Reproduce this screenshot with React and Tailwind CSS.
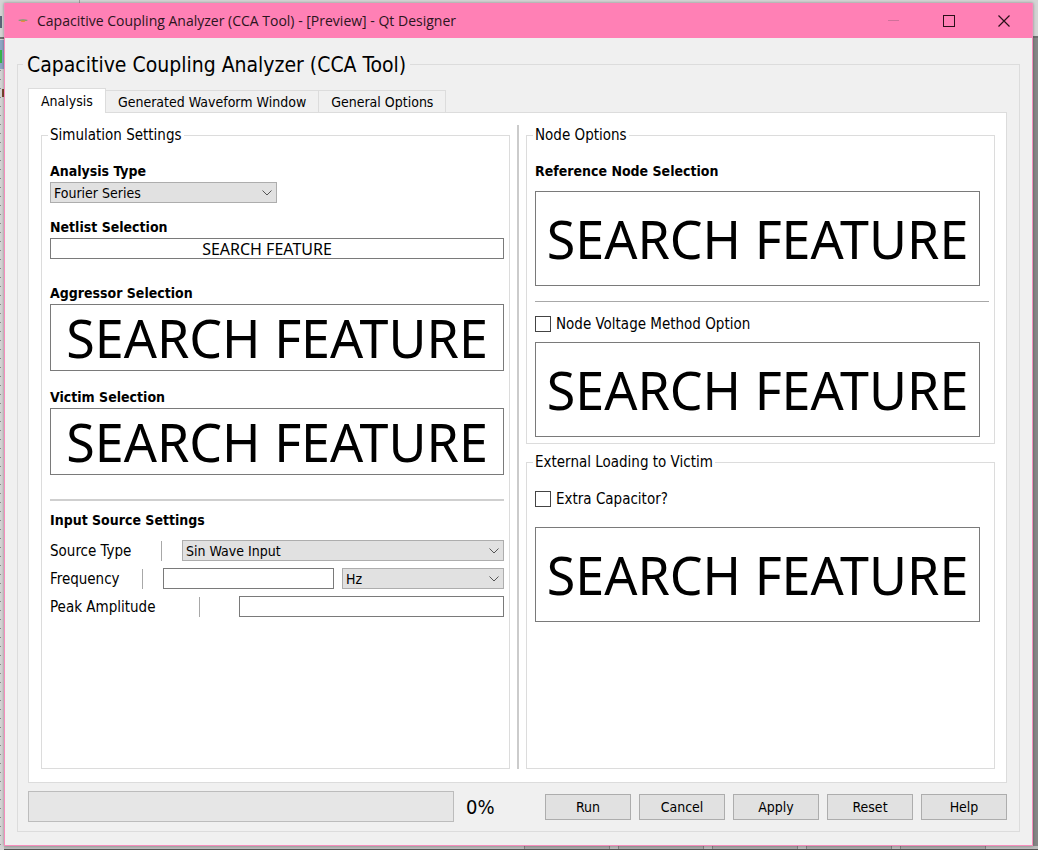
const UI = "font-['DejaVu_Sans_Condensed','DejaVu_Sans',sans-serif]";

const FIELD = "block w-full border border-[#7a7a7a] bg-white text-center text-black outline-none font-['Noto_Sans',sans-serif]";

function SearchBox({ id, size }) {
  const sizes = {
    sm: "h-[21px] pl-1 pr-6 text-[16px] leading-[18px]",
    md: "h-[67px] px-1 text-[52px] leading-[60px]",
    lg: "h-[95px] px-1 text-[52px] leading-[60px]",
  };
  return <input id={id} type="text" defaultValue="SEARCH FEATURE" className={`${FIELD} ${sizes[size]}`} />;
}

function Combo({ id, options, className = "", label }) {
  return (
    <div className={`relative h-[21px] ${className}`}>
      <select
        id={id}
        aria-label={label}
        className="block h-full w-full appearance-none border border-[#adadad] bg-[#e1e1e1] pl-[3px] pr-5 text-[14px] leading-[18px] text-black outline-none"
      >
        {options.map((o) => (
          <option key={o}>{o}</option>
        ))}
      </select>
      <svg viewBox="0 0 10 6" className="pointer-events-none absolute right-[5px] top-2 h-[6px] w-[10px]" fill="none" stroke="#555">
        <path d="M0.5 0.5 L5 5 L9.5 0.5" />
      </svg>
    </div>
  );
}

function GroupBox({ title, className = "", children }) {
  return (
    <fieldset className={`min-w-0 border border-[#dcdcdc] pl-2 pr-[5px] ${className}`}>
      <legend className="-ml-[2px] px-[2px] text-[15px] leading-5">{title}</legend>
      {children}
    </fieldset>
  );
}

function Heading({ htmlFor, className = "", children }) {
  return (
    <label htmlFor={htmlFor} className={`mb-px block text-[14px] font-bold leading-5 ${className}`}>
      {children}
    </label>
  );
}

function SourceRow({ htmlFor, label, labelWidth, gap, children }) {
  return (
    <div className="flex h-[21px] items-center">
      <label htmlFor={htmlFor} className={`shrink-0 whitespace-nowrap text-[15px] leading-5 ${labelWidth}`}>
        {label}
      </label>
      <span className={`h-5 w-px shrink-0 bg-[#a8a8a8] ${gap}`} />
      {children}
    </div>
  );
}

function Check({ id, children, className = "" }) {
  return (
    <div className={`flex h-5 items-center gap-[5px] ${className}`}>
      <input id={id} type="checkbox" className="h-4 w-4 shrink-0 appearance-none border border-[#444] bg-white checked:bg-[#444]" />
      <label htmlFor={id} className="text-[15px] leading-5">
        {children}
      </label>
    </div>
  );
}

function TitleBar() {
  const btn = "flex h-full w-[55px] items-center justify-center";
  return (
    <header className="flex h-[35px] items-center bg-[#ff80b5] pr-px">
      <svg viewBox="0 0 10 6" className="ml-[13px] h-[6px] w-[10px]">
        <path d="M0 2 Q5 0.4 10 2 L8.5 3 H1.5 Z" fill="#7f9a78" />
        <path d="M2.5 2.4 H7.5 L6.5 4 H3.5 Z" fill="#e88a3c" />
      </svg>
      <h1 className="ml-[9px] flex-1 truncate text-[14px] leading-5 text-[#2b1520] font-['Open_Sans',sans-serif]">
        Capacitive Coupling Analyzer (CCA Tool) - [Preview] - Qt Designer
      </h1>
      <button type="button" aria-label="Minimize" className={btn}>
        <svg viewBox="0 0 12 12" className="h-3 w-3" stroke="#d0709a">
          <path d="M0 5.5 H11" />
        </svg>
      </button>
      <button type="button" aria-label="Maximize" className={btn}>
        <svg viewBox="0 0 12 12" className="h-3 w-3" fill="none" stroke="#2a1019">
          <rect x="0.5" y="0.5" width="11" height="11" />
        </svg>
      </button>
      <button type="button" aria-label="Close" className={btn}>
        <svg viewBox="0 0 12 12" className="h-3 w-3" stroke="#2a1019" strokeWidth="1.2">
          <path d="M0.5 0.5 L11.5 11.5 M11.5 0.5 L0.5 11.5" />
        </svg>
      </button>
    </header>
  );
}

function Backdrop() {
  return (
    <div aria-hidden="true" className="absolute inset-0 overflow-hidden bg-[#d4d4d4]">
      <div className="absolute left-[79px] top-0 h-1 w-px bg-[#a0a0a0]" />
      <div className="absolute left-0 top-4 h-3 w-[2px] bg-[#5d6478]" />
      <div className="absolute left-0 top-[37px] h-[2px] w-1 bg-[#707070]" />
      <div className="absolute left-0 top-10 h-[29px] w-1 bg-[#8fa6c4]" />
      <div className="absolute left-0 top-[50px] h-[13px] w-[2px] bg-[#38b54a]" />
      <div className="absolute bottom-0 left-0 top-[70px] w-px bg-[repeating-linear-gradient(to_bottom,#8a8a8a_0px,#8a8a8a_1px,transparent_1px,transparent_9px)]" />
      <div className="absolute left-[2px] top-[89px] h-2 w-[2px] bg-[#7a4a30]" />
      <div className="absolute bottom-0 right-0 top-[36px] w-[6px] border-t-2 border-[#6e6e6e] bg-[#868686]" />
      <div className="absolute bottom-0 left-1 right-0 flex h-1 justify-end gap-2 border-b border-[#555] bg-[#bcbcbc] pr-[52px]">
        {[0, 1, 2, 3, 4].map((n) => (
          <span key={n} className="h-full w-[86px] border-x border-[#808080] bg-[#a9a9a9]" />
        ))}
      </div>
    </div>
  );
}

const TABS = ["Generated Waveform Window", "General Options"];
const ACTIONS = ["Run", "Cancel", "Apply", "Reset", "Help"];

export default function App() {
  return (
    <div className={`relative flex min-h-screen flex-col pb-1 pl-1 pr-[5px] pt-[3px] text-black ${UI}`}>
      <Backdrop />
      <main className="relative flex flex-1 flex-col border border-t-0 border-[#f58cbc] bg-[#f0f0f0] shadow-[0_0_3px_rgba(0,0,0,0.35)]">
        <TitleBar />
        <section className="mx-3 mb-[13px] mt-[26px] flex flex-1 flex-col border border-[#dcdcdc] pb-[9px] pl-[10px] pr-3">
          <h2 className="-ml-[5px] -mt-[13px] self-start bg-[#f0f0f0] px-1 text-[21px] leading-[26px]">
            Capacitive Coupling Analyzer (CCA Tool)
          </h2>

          <div role="tablist" className="mt-[10px] flex items-end text-[14px] leading-5">
            <button type="button" role="tab" aria-selected="true" className="relative -mb-px h-[25px] border border-b-0 border-[#dcdcdc] bg-white px-3">
              Analysis
            </button>
            {TABS.map((t) => (
              <button key={t} type="button" role="tab" aria-selected="false" className="h-[22px] border border-b-0 border-l-0 border-[#dcdcdc] px-3">
                {t}
              </button>
            ))}
          </div>

          <div role="tabpanel" className="grid flex-1 grid-cols-[1fr_2px_1fr] gap-x-[7px] border border-[#dcdcdc] bg-white pb-[13px] pl-3 pr-[11px] pt-3">
            <GroupBox title="Simulation Settings">
              <Heading htmlFor="analysis" className="mt-4">Analysis Type</Heading>
              <Combo id="analysis" options={["Fourier Series"]} className="w-1/2" />
              <Heading htmlFor="netlist" className="mt-[14px]">Netlist Selection</Heading>
              <SearchBox id="netlist" size="sm" />
              <Heading htmlFor="aggressor" className="mt-6">Aggressor Selection</Heading>
              <SearchBox id="aggressor" size="md" />
              <Heading htmlFor="victim" className="mt-4">Victim Selection</Heading>
              <SearchBox id="victim" size="md" />
              <div className="mt-6 h-[2px] bg-[#cfcfcf]" />
              <h3 className="mt-[9px] text-[14px] font-bold leading-5">Input Source Settings</h3>
              <div className="mt-[10px] flex flex-col gap-[7px]">
                <SourceRow htmlFor="source" label="Source Type" labelWidth="w-[111px]" gap="mr-5">
                  <Combo id="source" options={["Sin Wave Input"]} className="flex-1" />
                </SourceRow>
                <SourceRow htmlFor="freq" label="Frequency" labelWidth="w-[92px]" gap="mr-5">
                  <div className="flex flex-1 gap-2">
                    <input id="freq" type="text" className="h-[21px] w-[171px] border border-[#7a7a7a] bg-white px-1 text-[14px] outline-none" />
                    <Combo id="unit" label="Frequency unit" options={["Hz"]} className="flex-1" />
                  </div>
                </SourceRow>
                <SourceRow htmlFor="peak" label="Peak Amplitude" labelWidth="w-[149px]" gap="mr-[39px]">
                  <input id="peak" type="text" className="h-[21px] min-w-0 flex-1 border border-[#7a7a7a] bg-white px-1 text-[14px] outline-none" />
                </SourceRow>
              </div>
            </GroupBox>

            <div className="bg-[#cbcbcb]" />

            <div className="flex flex-col gap-2">
              <GroupBox title="Node Options">
                <Heading htmlFor="refnode" className="mt-4">Reference Node Selection</Heading>
                <div className="mr-[9px] mt-[10px]">
                  <SearchBox id="refnode" size="lg" />
                </div>
                <div className="mt-[15px] h-px bg-[#a8a8a8]" />
                <Check id="nvm" className="mt-3">Node Voltage Method Option</Check>
                <div className="mb-[6px] mr-[9px] mt-2">
                  <SearchBox id="nodes" size="lg" />
                </div>
              </GroupBox>
              <GroupBox title="External Loading to Victim" className="flex-1">
                <Check id="extra" className="mt-[17px]">Extra Capacitor?</Check>
                <div className="mr-[9px] mt-[18px]">
                  <SearchBox id="load" size="lg" />
                </div>
              </GroupBox>
            </div>
          </div>

          <footer className="mt-2 flex items-center">
            <div role="progressbar" aria-label="Progress" aria-valuenow={0} aria-valuemin={0} aria-valuemax={100} className="h-[31px] flex-1 border border-[#bcbcbc] bg-[#e6e6e6]" />
            <span className="ml-3 w-[79px] text-[20px] leading-6">0%</span>
            <div className="flex gap-2">
              {ACTIONS.map((a) => (
                <button key={a} type="button" className="h-[26px] w-[86px] border border-[#adadad] bg-[#e1e1e1] text-[14px] leading-5">
                  {a}
                </button>
              ))}
            </div>
          </footer>
        </section>
      </main>
    </div>
  );
}
